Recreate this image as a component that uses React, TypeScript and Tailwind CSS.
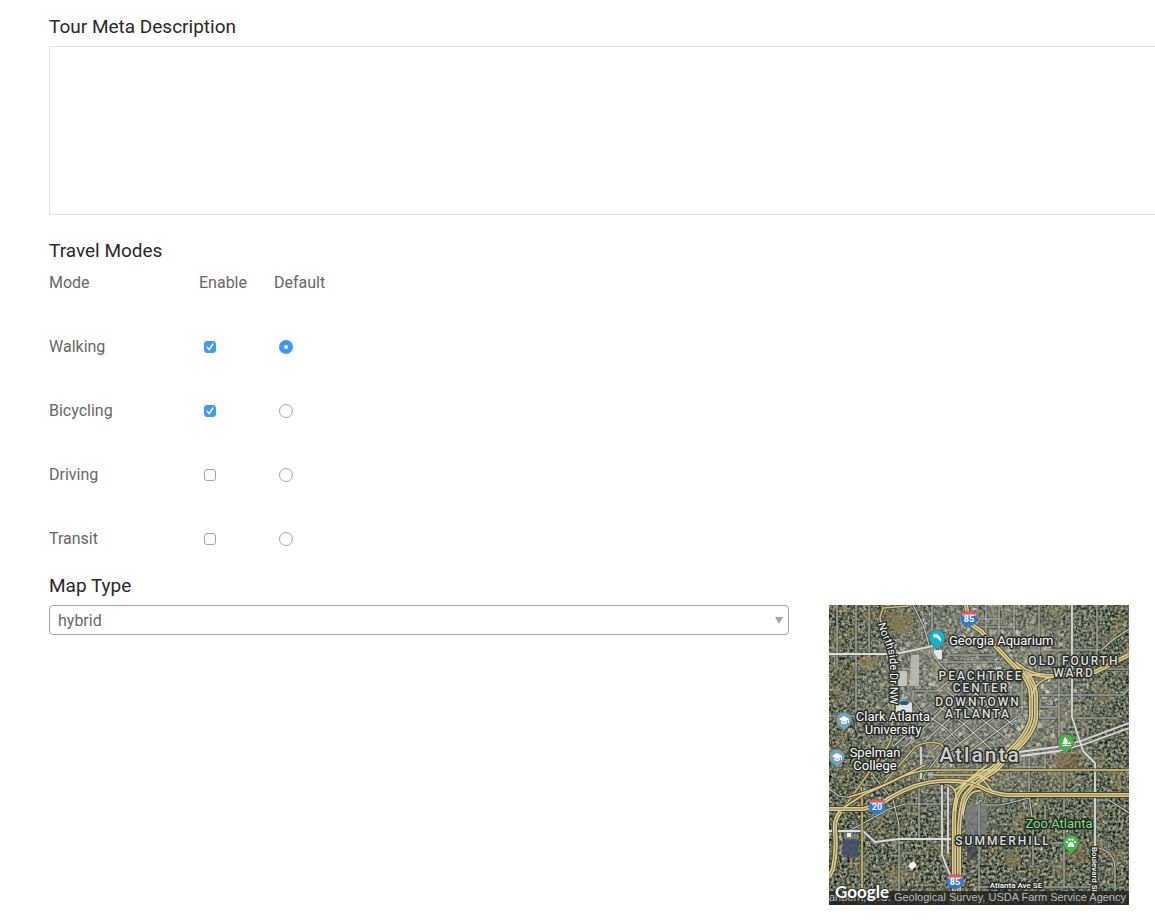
import { useState } from "react";

type Building = { x: number; y: number; w: number; h: number; fill: string; angle: number };

function makeRandom(seed: number) {
  let state = seed;
  return () => {
    state = (state * 1664525 + 1013904223) % 4294967296;
    return state / 4294967296;
  };
}

const ROOFS = ["#d8d6cc", "#c3c2ba", "#a9a99f", "#e6e5df", "#8f8f88", "#b9ac8c", "#3f4648", "#55595a"];

function makeBuildings(): Building[] {
  const random = makeRandom(85);
  const list: Building[] = [];
  for (let i = 0; i < 3400; i++) {
    const x = random() * 300;
    const y = random() * 300;
    const distance = Math.hypot((x - 150) / 115, (y - 90) / 105);
    const keep = random();
    const size = random();
    const tone = Math.floor(random() * ROOFS.length);
    const ratio = random();
    if (keep > Math.max(0.14, 1.2 - distance)) continue;
    const big = distance < 0.9 ? 4 : 2;
    list.push({
      x,
      y,
      w: 1 + size * big,
      h: 1 + ratio * big,
      fill: ROOFS[tone],
      angle: x > 75 && x < 190 && y > 100 && y < 165 ? -45 : 0,
    });
  }
  return list;
}

const BUILDINGS = makeBuildings();

const STREETS = [
  "M0 111H25",
  "M103 0V48L110 58L122 70",
  "M84 0L95 22L100 40",
  "M27 0V110",
  "M8 0V60",
  "M40 0V48",
  "M150 22H186",
  "M157 0V38",
  "M170 0V50",
  "M185 0V46",
  "M210 0V66",
  "M200 66V110",
  "M230 52V140",
  "M110 57H185",
  "M120 50H165",
  "M150 14H170",
  "M268 0V52",
  "M217 45H272L285 34L300 24",
  "M213 64H300",
  "M206 90H294L300 84",
  "M206 102H228",
  "M203 113H228",
  "M242 113H288",
  "M185 102H201",
  "M182 84V110",
  "M193 74V108",
  "M84 86H108L122 74",
  "M84 86V96L92 106",
  "M76 142L100 118L138 78",
  "M66 140L88 120",
  "M92 140L150 86",
  "M104 145L163 95",
  "M116 150L176 103",
  "M130 154L188 112",
  "M92 106L118 124L142 150",
  "M104 98L134 118L166 148",
  "M118 86L150 112L178 134",
  "M134 78L184 120",
  "M94 172L118 140",
  "M104 172L130 146",
  "M20 226L60 204L76 199H128",
  "M63 190L70 220V300",
  "M90 170V234",
  "M44 170L60 190",
  "M0 184L10 191L24 193",
  "M150 200V300",
  "M200 150V190L204 220V260",
  "M235 166V282",
  "M152 200H172L204 192",
  "M195 145V162M216 145V164",
  "M187 162H216",
  "M266 195H280L300 208",
  "M150 282H268",
  "M204 238H234",
  "M266 242Q286 246 286 264V300",
  "M216 200V232",
];

const AVENUES = [
  "M0 49H66L104 41",
  "M243 0V112L254 146L266 158V300",
  "M92 142V174",
  "M190 147L228 142L252 136L300 118",
  "M192 151L230 146L256 139L300 123",
  "M0 226H34L46 237L70 234H124",
  "M113 180V250L122 272",
  "M119 180V248",
];

const HIGHWAYS = [
  "M137 0L140 18L152 26L172 47L188 64Q202 76 202 92V110Q202 122 187 139L162 164Q134 178 129 190Q125 198 125 220V300",
  "M186 58Q205 70 207 90V112Q206 126 190 142L166 166Q142 180 135 192Q131 204 130 225V300",
  "M186 58Q200 72 226 71L266 67L300 50",
  "M0 204H34Q52 200 62 192Q88 177 112 176Q136 175 150 181Q164 189 178 190H300",
  "M12 206Q5 214 6 226Q8 246 4 264L0 272",
];

const RAMPS = [
  "M203 92Q204 76 226 71",
  "M198 72Q206 68 216 70",
  "M20 192Q48 184 64 176Q84 165 104 165H300",
  "M118 180Q131 182 126 206",
  "M152 186Q137 184 134 210",
  "M104 170H150L162 176",
  "M125 186L158 160",
  "M150 170L164 187",
  "M14 203L34 190Q52 182 66 175L96 160",
];

const ARTERIALS = [
  "M80 1L54 3L51 12L53 22Q62 33 64 54V108L62 134Q60 142 48 156L14 204",
  "M33 188V300",
  "M50 184L86 142Q98 135 112 139L120 150",
  "M32 182L33 190",
];

function Shield({ x, y, label }: { x: number; y: number; label: string }) {
  return (
    <g transform={`translate(${x} ${y})`}>
      <path d="M-8 -5C-6 -5 -5 -6 -4 -7C-2 -6 2 -6 4 -7C5 -6 6 -5 8 -5C7 -3 9 -1 8 3C7 6 3 7 0 9C-3 7 -7 6 -8 3C-9 -1 -7 -3 -8 -5Z" fill="#3577cf" />
      <path d="M-8 -5C-6 -5 -5 -6 -4 -7C-2 -6 2 -6 4 -7C5 -6 6 -5 8 -5L7 -3H-7Z" fill="#e05c55" />
      <path d="M-7 -3H7" stroke="#fff" strokeWidth="0.7" />
      <text y="4" textAnchor="middle" className="fill-white text-[9px] font-bold">{label}</text>
    </g>
  );
}

function Pin({ x, y, color, children }: { x: number; y: number; color: string; children: React.ReactNode }) {
  return (
    <g transform={`translate(${x} ${y})`}>
      <path d="M0 12C-1 8 -8 6 -8 0A8 8 0 1 1 8 0C8 6 1 8 0 12Z" fill={color} stroke="#33483f" strokeWidth="0.4" />
      {children}
    </g>
  );
}

function Cap() {
  return <path d="M-5 -1L0 -4L5 -1V3H4V0L0 2ZM-3 1V3Q0 5 3 3V1L0 3Z" fill="#fff" />;
}

const OUTLINE = "stroke-[#262a27] stroke-[3px] [paint-order:stroke] [stroke-linejoin:round]";
const PLACE = `fill-white text-[13px] ${OUTLINE}`;
const DISTRICT = `fill-[#dcdddc] text-[12px] font-medium tracking-[2px] ${OUTLINE}`;

function CityMap() {
  return (
    <svg viewBox="0 0 300 300" role="img" aria-label="Hybrid map of Atlanta" className="block h-auto w-full font-[Roboto,sans-serif]">
      <defs>
        <filter id="ground" x="0" y="0" width="100%" height="100%" colorInterpolationFilters="sRGB">
          <feTurbulence type="fractalNoise" baseFrequency="0.38" numOctaves="3" seed="12" />
          <feColorMatrix values="1.1 0.1 0 0 -0.24  1.1 0 0.06 0 -0.19  1 0 0 0.05 -0.2  0 0 0 0 1" />
        </filter>
        <filter id="soil" x="0" y="0" width="100%" height="100%" colorInterpolationFilters="sRGB">
          <feTurbulence type="fractalNoise" baseFrequency="0.05" numOctaves="4" seed="7" />
          <feColorMatrix values="0 0 0 0 0.6  0 0 0 0 0.53  0 0 0 0 0.37  4 0 0 0 -2" />
        </filter>
        <filter id="speckle" x="0" y="0" width="100%" height="100%" colorInterpolationFilters="sRGB">
          <feTurbulence type="fractalNoise" baseFrequency="0.28" numOctaves="2" seed="31" />
          <feColorMatrix values="0 0 0 0 0.82  0 0 0 0 0.82  0 0 0 0 0.76  0 5 0 0 -2.95" />
        </filter>
        <radialGradient id="core" cx="0.5" cy="0.3" r="0.48">
          <stop offset="0" stopColor="#a9aaa2" stopOpacity="0.5" />
          <stop offset="0.6" stopColor="#999b91" stopOpacity="0.35" />
          <stop offset="1" stopColor="#858a7e" stopOpacity="0" />
        </radialGradient>
        <path id="northside" d="M49 19C52 32 61 42 61 62V110" />
      </defs>
      <rect width="300" height="300" filter="url(#ground)" />
      <rect width="300" height="300" filter="url(#soil)" opacity="0.5" />
      <rect width="300" height="300" fill="url(#core)" />
      <rect width="300" height="300" filter="url(#speckle)" opacity="0.55" />

      <g>
        {BUILDINGS.map((b, i) => (
          <rect key={i} x={b.x} y={b.y} width={b.w} height={b.h} fill={b.fill} opacity="0.65" transform={`rotate(${b.angle} ${b.x} ${b.y})`} />
        ))}
        <path d="M55 7H84V24L72 30L56 20Z" fill="#8b7746" opacity="0.45" />
        <path d="M82 50H90V81H81Z" fill="#bfc0b8" opacity="0.85" />
        <path d="M69 66H78V81H69Z" fill="#d0d0c9" opacity="0.85" />
        <path d="M105 45H113V54H105Z" fill="#e6e6e6" />
        <path d="M67 98Q75 92 83 98V107H67Z" fill="#dde0e1" />
        <path d="M70 97Q75 94 81 97L78 100H72Z" fill="#275b8d" />
        <path d="M15 229H30V234H15Z" fill="#7d7f7a" />
        <path d="M14 235H30V252H14Z" fill="#3f506b" opacity="0.85" />
        <path d="M18 228H22V232H18Z" fill="#f4f4f0" />
        <path d="M134 200H158V233H138Z" fill="#7b7f86" opacity="0.75" />
        <path d="M138 242H148V255H138Z" fill="#3d4548" opacity="0.7" />
        <path d="M84 256L88 260L83 265L79 261Z" fill="#f4f4f0" />
        <path d="M174 246H191V262H178Z" fill="#92794a" opacity="0.5" />
        <path d="M236 246L256 240L260 256L246 262Z" fill="#8f7650" opacity="0.45" />
        <path d="M228 148H250V166H228Z" fill="#80633f" opacity="0.45" />
        <path d="M30 52H48V64H30Z" fill="#96804e" opacity="0.5" />
      </g>

      <g fill="none" strokeLinejoin="round">
        {STREETS.map((d) => (
          <path key={d} d={d} stroke="#2e332d" strokeWidth="2.8" opacity="0.6" />
        ))}
        {STREETS.map((d) => (
          <path key={d} d={d} stroke="#c9cbca" strokeWidth="1.1" />
        ))}
        {AVENUES.map((d) => (
          <path key={d} d={d} stroke="#5b605b" strokeWidth="3.2" opacity="0.6" />
        ))}
        {AVENUES.map((d) => (
          <path key={d} d={d} stroke="#dcdddc" strokeWidth="1.8" />
        ))}
        {ARTERIALS.map((d) => (
          <path key={d} d={d} stroke="#4b4429" strokeWidth="3" opacity="0.8" />
        ))}
        {ARTERIALS.map((d) => (
          <path key={d} d={d} stroke="#cdbb7c" strokeWidth="1.6" />
        ))}
        {HIGHWAYS.map((d) => (
          <path key={d} d={d} stroke="#4b442b" strokeWidth="5.8" />
        ))}
        {RAMPS.map((d) => (
          <path key={d} d={d} stroke="#4b442b" strokeWidth="3.2" />
        ))}
        {HIGHWAYS.map((d) => (
          <path key={d} d={d} stroke="#dccd90" strokeWidth="4.2" />
        ))}
        {HIGHWAYS.map((d) => (
          <path key={d} d={d} stroke="#80724a" strokeWidth="0.9" />
        ))}
        {RAMPS.map((d) => (
          <path key={d} d={d} stroke="#dccd90" strokeWidth="1.7" />
        ))}
      </g>

      <Shield x={140} y={13} label="85" />
      <Shield x={48} y={201} label="20" />
      <Shield x={126} y={276} label="85" />

      <Pin x={108} y={33} color="#12b5cb">
        <path d="M-4 -3C-2 -5 1 -4 2 -2C4 -1 4 1 4 4C3 2 1 1 0 0C-1 -1 -2 -1 -3 0C-3 -1 -4 -2 -4 -3Z" fill="#fff" />
      </Pin>
      <Pin x={15} y={115} color="#78a0b5"><Cap /></Pin>
      <Pin x={8} y={152} color="#78a0b5"><Cap /></Pin>
      <Pin x={237} y={137} color="#4bb04f">
        <path d="M-1 -5L2 -1H1L3 2H0V3H5V4H-4V3H-1V2H-4L-2 -1H-3ZM3 -1L5 2H3Z" fill="#fff" />
      </Pin>
      <Pin x={242} y={238} color="#4bb04f">
        <path d="M0 -1C2 -1 4 2 3 4Q0 3 -3 4C-4 2 -2 -1 0 -1Z" fill="#fff" />
        <circle cx="-4" cy="-1" r="1.1" fill="#fff" />
        <circle cx="-1.6" cy="-3.4" r="1.2" fill="#fff" />
        <circle cx="1.6" cy="-3.4" r="1.2" fill="#fff" />
        <circle cx="4" cy="-1" r="1.1" fill="#fff" />
      </Pin>

      <text className={`fill-white text-[11px] ${OUTLINE}`}>
        <textPath href="#northside">Northside Dr NW</textPath>
      </text>
      <text x="120" y="40" className={PLACE}>Georgia Aquarium</text>
      <g textAnchor="middle">
        <text x="64" y="116" className={PLACE}>Clark Atlanta</text>
        <text x="64" y="129" className={PLACE}>University</text>
        <text x="46" y="152" className={PLACE}>Spelman</text>
        <text x="46" y="165" className={PLACE}>College</text>
        <text x="245" y="60" className={DISTRICT}>OLD FOURTH</text>
        <text x="245" y="72" className={DISTRICT}>WARD</text>
        <text x="152" y="75" className={DISTRICT}>PEACHTREE</text>
        <text x="152" y="87" className={DISTRICT}>CENTER</text>
        <text x="149" y="101" className={DISTRICT}>DOWNTOWN</text>
        <text x="149" y="113" className={DISTRICT}>ATLANTA</text>
        <text x="174" y="240" className={DISTRICT}>SUMMERHILL</text>
        <text x="151" y="157" className={`fill-[#cfd0ce] text-[21px] font-medium tracking-[2px] ${OUTLINE}`}>Atlanta</text>
        <text x="230" y="223" className="fill-[#8edc91] stroke-[#202b20] stroke-[3px] text-[13px] [paint-order:stroke]">Zoo Atlanta</text>
        <text x="187" y="283" className={`fill-white text-[8px] font-medium ${OUTLINE}`}>Atlanta Ave SE</text>
      </g>
      <text transform="translate(263 242) rotate(90)" className={`fill-white text-[8px] font-medium ${OUTLINE}`}>Boulevard SE</text>

      <rect y="286" width="300" height="14" fill="#1c1d1c" opacity="0.78" />
      <g className="fill-[#bdbdbd] font-['Liberation_Sans',sans-serif] text-[11px]">
        <text x="0" y="296">anborn, U.S.</text>
        <text x="297" y="296" textAnchor="end">Geological Survey, USDA Farm Service Agency</text>
      </g>
      <text x="6" y="293" className="fill-white stroke-[#3a3d3a] stroke-2 font-[Lato,sans-serif] text-[17px] font-bold [paint-order:stroke]">Google</text>
    </svg>
  );
}

const MODES = ["Walking", "Bicycling", "Driving", "Transit"];

const HEADING = "block text-[19px] leading-7 text-[#282828]";

export default function App() {
  const [enabled, setEnabled] = useState<string[]>(["Walking", "Bicycling"]);
  const [preferred, setPreferred] = useState("Walking");
  const [mapType, setMapType] = useState("hybrid");

  const toggle = (mode: string) =>
    setEnabled((current) => (current.includes(mode) ? current.filter((m) => m !== mode) : [...current, mode]));

  return (
    <main className="min-h-screen bg-white pt-[13px] pl-[49px] font-[Roboto,sans-serif] text-base text-[#666]">
      <label htmlFor="meta" className={HEADING}>Tour Meta Description</label>
      <textarea id="meta" className="mt-[5px] block h-[169px] w-full resize-none border border-r-0 border-[#e1e1e1] bg-white p-2 outline-none" />

      <section className="mt-[22px]">
        <h2 id="modes" className={HEADING}>Travel Modes</h2>
        <table aria-labelledby="modes" className="table-fixed border-collapse text-left">
          <thead>
            <tr className="h-[50px] align-top leading-9">
              <th className="w-[150px] p-0 font-normal">Mode</th>
              <th className="w-[75px] p-0 font-normal">Enable</th>
              <th className="w-[75px] p-0 font-normal">Default</th>
            </tr>
          </thead>
          <tbody>
            {MODES.map((mode) => (
              <tr key={mode} className="h-16">
                <th scope="row" className="p-0 font-normal">{mode}</th>
                <td className="p-0 pl-[5px]">
                  <span className="grid w-3">
                    <input
                      type="checkbox"
                      aria-label={`Enable ${mode}`}
                      checked={enabled.includes(mode)}
                      onChange={() => toggle(mode)}
                      className="peer col-start-1 row-start-1 size-3 appearance-none rounded-[3px] border border-[#a6a6a6] bg-white checked:border-[#3b99fc] checked:bg-[#3b99fc]"
                    />
                    <svg viewBox="0 0 12 12" aria-hidden="true" className="pointer-events-none invisible col-start-1 row-start-1 size-3 peer-checked:visible">
                      <path d="M3.2 6.4L5.2 8.6L8.8 3.2" fill="none" stroke="#fff" strokeWidth="1.6" strokeLinecap="round" strokeLinejoin="round" />
                    </svg>
                  </span>
                </td>
                <td className="p-0 pl-[5px]">
                  <input
                    type="radio"
                    name="default-mode"
                    aria-label={`Default ${mode}`}
                    checked={preferred === mode}
                    onChange={() => setPreferred(mode)}
                    className="block size-3.5 appearance-none rounded-full border border-[#a6a6a6] bg-white checked:border-[5px] checked:border-[#3b99fc]"
                  />
                </td>
              </tr>
            ))}
          </tbody>
        </table>
      </section>

      <section className="mt-px pb-4">
        <label htmlFor="map-type" className={HEADING}>Map Type</label>
        <div className="mt-[5px] flex items-start gap-10 pr-[26px]">
          <div className="grid min-w-0 flex-1 items-center">
            <select
              id="map-type"
              value={mapType}
              onChange={(event) => setMapType(event.target.value)}
              className="col-start-1 row-start-1 h-[30px] w-full appearance-none rounded border border-[#a3a3a3] bg-white px-2 pt-0.5 outline-none"
            >
              <option>hybrid</option>
              <option>roadmap</option>
              <option>satellite</option>
              <option>terrain</option>
            </select>
            <svg viewBox="0 0 8 7" aria-hidden="true" className="pointer-events-none col-start-1 row-start-1 mr-1.5 h-[7px] w-2 justify-self-end">
              <path d="M0 0H8L4 7Z" fill="#a5a5a5" />
            </svg>
          </div>
          <div className="w-[300px] shrink-0">
            <CityMap />
          </div>
        </div>
      </section>
    </main>
  );
}
